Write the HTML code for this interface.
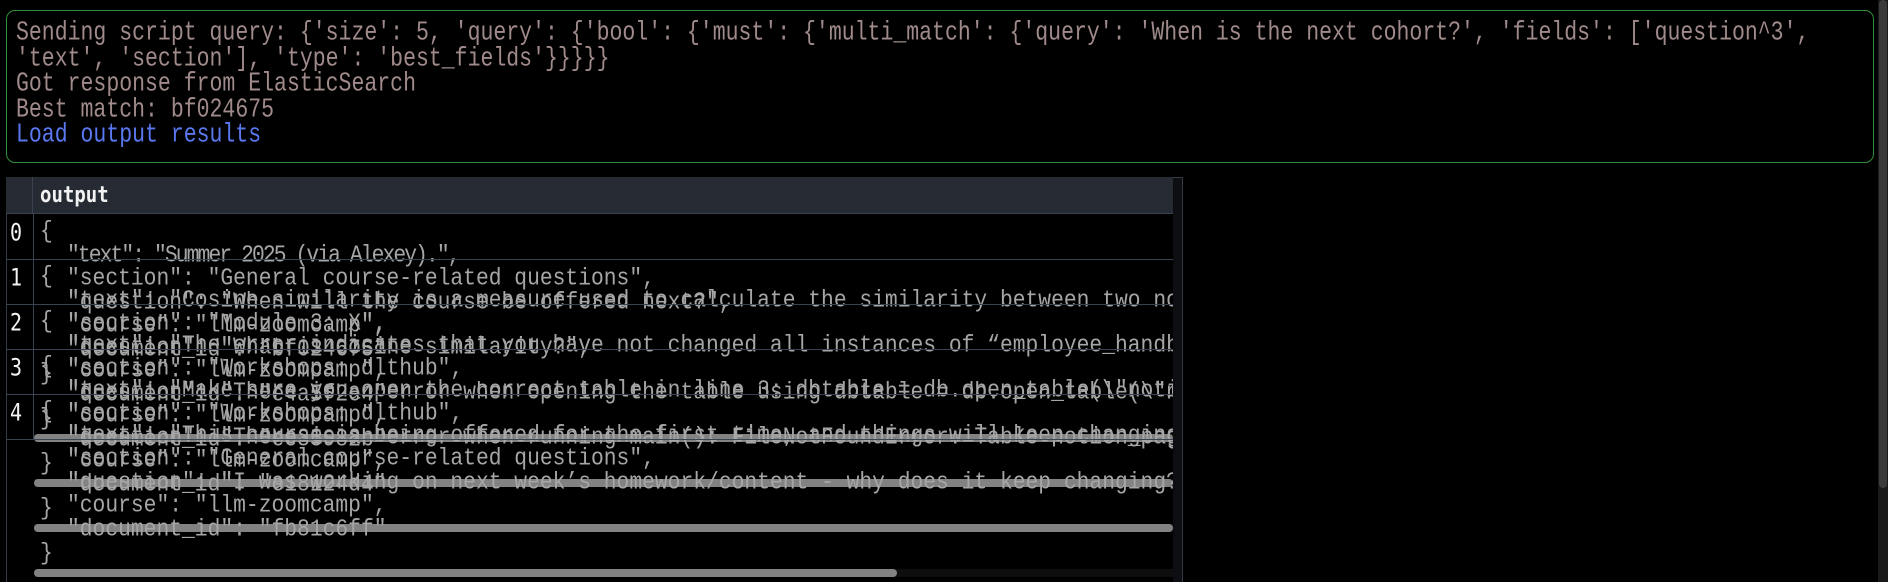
<!DOCTYPE html>
<html><head><meta charset="utf-8">
<style>
html,body{margin:0;padding:0;background:#000;width:1888px;height:582px;overflow:hidden;position:relative}
.box{position:absolute;left:6px;top:10px;width:1868px;height:153px;border:1px solid #2f8f3f;border-radius:9px;box-sizing:border-box}
.log{position:absolute;left:16px;top:22px;font-family:"Liberation Mono",monospace;font-size:21.5px;line-height:25.6px;color:#a08a8a;white-space:pre}
.log div{transform:scaleY(1.25);transform-origin:50% 55%}
.log .lk{color:#5a78f0}
.tbl{position:absolute;left:6px;top:177px;width:1177px;height:405px;border-left:1px solid #353b45;border-right:1px solid #353b45;border-top:1px solid #353b45;box-sizing:border-box}
.hdr{position:absolute;left:6px;top:177px;width:1167px;height:37px;background:#262b33;border-bottom:1px solid #3a4150;box-sizing:border-box}
.hdr .ix{position:absolute;left:26px;top:0;width:1px;height:37px;background:#3a4150}
.hdr .t{position:absolute;left:34px;top:7px;font-family:"DejaVu Sans Mono","Liberation Mono",monospace;font-weight:bold;font-size:19px;color:#f2f2f2;transform:scaleY(1.15)}
.vtrack{position:absolute;left:1173px;top:178px;width:9px;height:404px;background:#0c0e11}
.colline{position:absolute;left:33px;top:214px;width:1px;height:225px;background:#3a4150}
.rline{position:absolute;left:6px;width:1167px;height:1px;background:#3a4150}
.ixn{position:absolute;left:10px;width:20px;font-family:"DejaVu Sans Mono","Liberation Mono",monospace;font-size:20px;color:#f4f4f4;transform:scaleY(1.2)}
.cell{position:absolute;left:34px;width:1139px;height:200px;overflow:hidden}
.pre{position:absolute;left:6px;top:7px;font-family:"Liberation Mono",monospace;font-size:21.3px;line-height:23.6px;color:#a6a6a6;white-space:pre}
.pre div{transform:scaleY(1.15);transform-origin:0 55%}
.pre .in{padding-left:27px}
.track{position:absolute;left:0;top:175px;width:1139px;height:8px;background:#0e0e0e}
.bar{position:absolute;left:0;top:175px;height:8px;background:#828282;border-radius:4px}
.pscroll{position:absolute;left:1878px;top:0;width:10px;height:582px;background:#1a1a1a}
.pthumb{position:absolute;left:1879px;top:0;width:8px;height:488px;background:#3a3a3a;border-radius:4px}
</style></head><body>
<div class="box"></div>
<div class="log"><div>Sending script query: {'size': 5, 'query': {'bool': {'must': {'multi_match': {'query': 'When is the next cohort?', 'fields': ['question^3',</div><div>'text', 'section'], 'type': 'best_fields'}}}}}</div><div>Got response from ElasticSearch</div><div>Best match: bf024675</div><div class="lk">Load output results</div></div>

<div class="tbl"></div>
<div class="vtrack"></div>
<div class="hdr"><div class="ix"></div><div class="t">output</div></div>

<div class="cell" style="top:214px"><div class="pre"><div>{</div><div class="in" style="letter-spacing:-1.9px">"text": "Summer 2025 (via Alexey).",</div><div class="in">"section": "General course-related questions",</div><div class="in">"question": "When will the course be offered next?",</div><div class="in">"course": "llm-zoomcamp",</div><div class="in">"document_id": "bf024675"</div><div>}</div></div></div>

<div class="cell" style="top:259px"><div class="pre"><div>{</div><div class="in">"text": "Cosine similarity is a measure used to calculate the similarity between two non-zero vectors",</div><div class="in">"section": "Module 3: X",</div><div class="in">"question": "What is cosine similarity?",</div><div class="in">"course": "llm-zoomcamp",</div><div class="in">"document_id": "e4a5f2e4"</div><div>}</div></div><div class="track"></div><div class="bar" style="width:1139px"></div></div>

<div class="cell" style="top:304px"><div class="pre"><div>{</div><div class="in">"text": "The error indicates that you have not changed all instances of “employee_handbook”",</div><div class="in">"section": "Workshops: dlthub",</div><div class="in">"question": "There is an error when opening the table using dbtable = db.open_table(\"notion_pages\")",</div><div class="in">"course": "llm-zoomcamp",</div><div class="in">"document_id": "ee35982b"</div><div>}</div></div><div class="track"></div><div class="bar" style="width:1139px"></div></div>

<div class="cell" style="top:349px"><div class="pre"><div>{</div><div class="in">"text": "Make sure you open the correct table in line 3: dbtable = db.open_table(\"notion_pages\")",</div><div class="in">"section": "Workshops: dlthub",</div><div class="in">"question": "There is an error when running main(): FileNotFoundError: Table notion_pages",</div><div class="in">"course": "llm-zoomcamp",</div><div class="in">"document_id": "e18124d4"</div><div>}</div></div><div class="track"></div><div class="bar" style="width:1139px"></div></div>

<div class="cell" style="top:394px;height:188px"><div class="pre"><div>{</div><div class="in">"text": "This course is being offered for the first time, and things will keep changing",</div><div class="in">"section": "General course-related questions",</div><div class="in">"question": "I was working on next week’s homework/content - why does it keep changing?",</div><div class="in">"course": "llm-zoomcamp",</div><div class="in">"document_id": "fb81c6ff"</div><div>}</div></div><div class="track"></div><div class="bar" style="width:863px"></div></div>

<div class="colline"></div>
<div class="rline" style="top:259px"></div>
<div class="rline" style="top:304px"></div>
<div class="rline" style="top:349px"></div>
<div class="rline" style="top:394px"></div>
<div class="rline" style="top:439px"></div>
<div class="ixn" style="top:220px">0</div>
<div class="ixn" style="top:265px">1</div>
<div class="ixn" style="top:310px">2</div>
<div class="ixn" style="top:355px">3</div>
<div class="ixn" style="top:400px">4</div>

<div class="pscroll"></div><div class="pthumb"></div>
</body></html>
